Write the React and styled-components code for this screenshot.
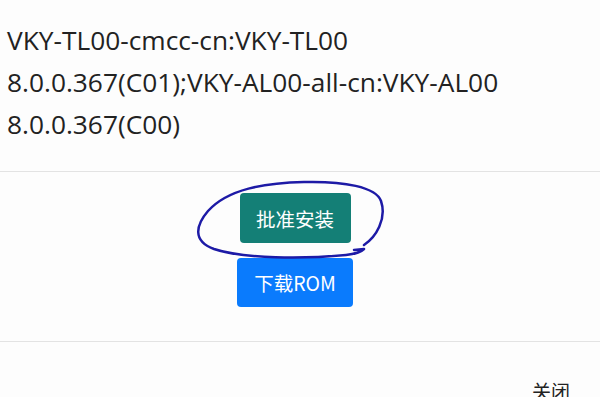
import React from 'react'
import styled, { createGlobalStyle } from 'styled-components'

const GlobalStyle = createGlobalStyle`
  html, body {
    margin: 0;
    padding: 0;
    background: #fdfdfd;
  }
  body {
    font-family: "Open Sans", "Noto Sans", "Noto Sans CJK SC", sans-serif;
    color: #212529;
  }
`

const Page = styled.div`
  width: 600px;
  height: 397px;
  overflow: hidden;
  display: flex;
  flex-direction: column;
`

const Body = styled.div`
  padding: 19px 8px 0 7px;
  height: 171px;
  box-sizing: border-box;
  flex-shrink: 0;
`

const Line = styled.div`
  font-size: 26.3px;
  line-height: 42px;
  white-space: nowrap;
  color: #222;
`

const Divider = styled.div`
  height: 1px;
  background: #e3e3e3;
  flex-shrink: 0;
`

const Actions = styled.div`
  display: flex;
  flex-direction: column;
  align-items: center;
  gap: 15px;
  padding: 21px 10px 34px 0;
`

const Circled = styled.div`
  position: relative;
`

const Scribble = styled.svg`
  position: absolute;
  left: -46px;
  top: -16px;
  pointer-events: none;
`

const Button = styled.div`
  background-color: ${props => props.variant === 'approve' ? '#147f76' : '#0a7bfd'};
  color: white;
  width: ${props => props.variant === 'approve' ? '111px' : '116px'};
  height: ${props => props.variant === 'approve' ? '50px' : '49px'};
  display: flex;
  align-items: center;
  justify-content: center;
  font-size: 19.5px;
  font-weight: 400;
  font-family: "Noto Sans CJK SC", "Open Sans", sans-serif;
  border-radius: 4px;
  cursor: pointer;
`

const Footer = styled.div`
  display: flex;
  justify-content: flex-end;
  padding: 38px 30px 0 0;
`

const Close = styled.div`
  font-size: 19px;
  font-family: "Noto Sans CJK SC", sans-serif;
  color: #222;
  line-height: 22px;
`

export default function App () {
  return (
    <Page>
      <GlobalStyle />
      <Body>
        <Line>VKY-TL00-cmcc-cn:VKY-TL00</Line>
        <Line>8.0.0.367(C01);VKY-AL00-all-cn:VKY-AL00</Line>
        <Line>8.0.0.367(C00)</Line>
      </Body>
      <Divider />
      <Actions>
        <Circled>
          <Button variant="approve">批准安装</Button>
          <Scribble width="200" height="86" viewBox="0 0 200 86">
            <path
              d="M170 68 C182 60 193 42 187 24 C182 10 150 4 110 5 C70 6 34 12 14 34 C2 48 -2 64 20 72 C50 82 110 82 152 78 C162 77 168 74 170 72 L160 73"
              fill="none"
              stroke="#1d1aa6"
              strokeWidth="2.5"
              strokeLinecap="round"
              strokeLinejoin="round"
            />
          </Scribble>
        </Circled>
        <Button variant="download">下载ROM</Button>
      </Actions>
      <Divider />
      <Footer>
        <Close>关闭</Close>
      </Footer>
    </Page>
  )
}
